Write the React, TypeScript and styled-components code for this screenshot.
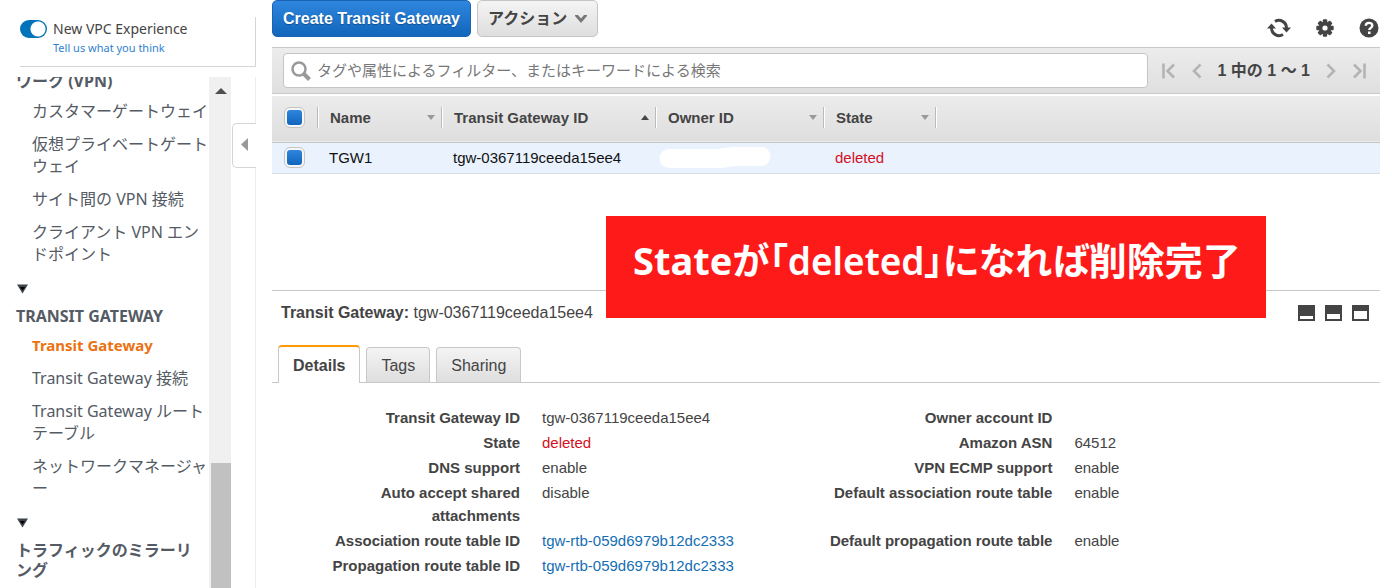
import React from "react";
import styled, { createGlobalStyle, css } from "styled-components";

const sans = `"Liberation Sans", "Noto Sans CJK JP", sans-serif`;
const ember = `"Noto Sans", "Noto Sans CJK JP", sans-serif`;

const GlobalStyle = createGlobalStyle`
  *, *::before, *::after { box-sizing: border-box; }
  body { margin: 0; background: #fff; color: #444; font: 15px/23px ${sans}; }
  a { color: #146eb4; text-decoration: none; }
  button { font: inherit; cursor: pointer; }
`;

const Page = styled.div`
  display: flex;
  height: 100vh;
  overflow: hidden;
`;

/* ---------- sidebar ---------- */

const Sidebar = styled.aside`
  flex: none;
  display: flex;
  flex-direction: column;
  width: 256px;
  padding-top: 17px;
  font-family: ${ember};
  color: #545b64;
`;

const Experience = styled.header`
  display: flex;
  gap: 6px;
  height: 50px;
  margin-left: 20px;
  border-right: 1px solid #d5d5d5;
  border-bottom: 1px solid #d5d5d5;
`;

const Switch = styled.input`
  appearance: none;
  flex: none;
  width: 27px;
  height: 18px;
  margin: 3px 0 0;
  border-radius: 9px;
  background: radial-gradient(circle at 18px 9px, #fff 7px, #0073bb 8px);
`;

const ExperienceText = styled.div`
  display: flex;
  flex-direction: column;
  padding-top: 2px;
`;

const SwitchLabel = styled.label`
  font-size: 14px;
  line-height: 20px;
  color: #444;
`;

const Feedback = styled.a`
  font-size: 11px;
  line-height: 18px;
  color: #2f7fd0;
`;

const SidebarBody = styled.div`
  flex: 1;
  display: flex;
  min-height: 0;
  margin-top: 10px;
  border-right: 1px solid #eee;
`;

const Nav = styled.nav`
  flex: 1;
  overflow: hidden;
  padding-left: 16px;
`;

const GroupTitle = styled.h2<{ $clipped?: boolean }>`
  margin: ${(p) => (p.$clipped ? "-6px 0 9px" : "0 0 8px")};
  padding-right: 8px;
  font-size: 16px;
  line-height: 20px;
  font-weight: 700;
`;

const NavList = styled.ul`
  display: flex;
  flex-direction: column;
  gap: 11px;
  margin: 0;
  padding: 0 0 0 16px;
  list-style: none;
  font-size: 16px;
  line-height: 22px;
`;

const NavLink = styled.a<{ $active?: boolean }>`
  color: ${(p) => (p.$active ? "#ec7211" : "#545b64")};
  font-weight: ${(p) => (p.$active ? 700 : 400)};
  font-size: ${(p) => (p.$active ? "15px" : "16px")};
`;

const Fold = styled.button`
  display: block;
  margin: 18px 0 13px;
  padding: 0;
  border: 0;
  background: none;
  line-height: 10px;
  height: 10px;
`;

const ScrollTrack = styled.div`
  flex: none;
  display: flex;
  flex-direction: column;
  align-items: center;
  justify-content: space-between;
  width: 22px;
  padding: 11px 0 0 2px;
  background: #f0f0f0;
`;

const ScrollThumb = styled.div`
  width: 20px;
  height: 125px;
  background: #c1c1c1;
`;

const Collapse = styled.button`
  flex: none;
  width: 24px;
  height: 45px;
  margin: 46px -1px 0 1px;
  padding: 0;
  border: 1px solid #d5d5d5;
  border-right: 0;
  border-radius: 5px 0 0 5px;
  background: #fff;
`;

/* ---------- main pane ---------- */

const Main = styled.main`
  position: relative;
  flex: 1;
  min-width: 0;
  padding: 0 12px 0 16px;
`;

const Toolbar = styled.div`
  display: flex;
  align-items: flex-start;
  gap: 6px;
  height: 47px;
`;

const Button = styled.button<{ $primary?: boolean }>`
  display: flex;
  align-items: center;
  gap: 8px;
  height: 37px;
  padding: 0 10px;
  border-radius: 5px;
  font-size: 16px;
  font-weight: 700;
  white-space: nowrap;
  ${(p) =>
    p.$primary
      ? css`
          border: 1px solid #1a62b3;
          color: #fff;
          background: linear-gradient(#2f86de, #1166bb);
          text-shadow: 0 1px 1px #0f4e91;
        `
      : css`
          border: 1px solid #c4c4c4;
          color: #444;
          background: linear-gradient(#f4f4f4, #dedede);
        `}
`;

const Tools = styled.div`
  display: flex;
  align-items: center;
  gap: 25px;
  margin: 18px 1px 0 auto;
`;

const IconButton = styled.button`
  display: flex;
  padding: 0;
  border: 0;
  background: none;
  color: #444;
`;

const FilterBar = styled.div`
  display: flex;
  align-items: center;
  height: 47px;
  padding: 0 14px 0 11px;
  border: solid #c8c8c8;
  border-width: 1px 0;
  background: linear-gradient(#ececec, #dfdfdf);
`;

const Search = styled.label`
  flex: 1;
  display: flex;
  align-items: center;
  gap: 6px;
  height: 35px;
  padding: 0 7px;
  border: 1px solid #c4c4c4;
  border-radius: 4px;
  background: #fff;
`;

const SearchInput = styled.input`
  flex: 1;
  min-width: 0;
  padding: 0;
  border: 0;
  outline: 0;
  background: none;
  font: 15px/24px ${sans};
  &::placeholder { color: #777; opacity: 1; }
`;

const Pager = styled.div`
  display: flex;
  align-items: center;
  margin-left: 14px;
  gap: 14px;
  font-size: 16px;
  font-weight: 700;
  white-space: nowrap;
`;

const PagerButton = styled(IconButton)`
  color: #b4b4b4;
`;

const TableArea = styled.section`
  min-height: 197px;
  padding-top: 2px;
  border-bottom: 1px solid #c8c8c8;
`;

const Table = styled.table`
  width: 100%;
  table-layout: fixed;
  border-collapse: collapse;
`;

const HeadRow = styled.tr`
  height: 46px;
  background: linear-gradient(#ececec, #dedede);
  border-bottom: 1px solid #c4c4c4;
`;

const Th = styled.th`
  padding: 0 0 2px;
  text-align: left;
`;

const HeadCell = styled.div<{ $start?: boolean }>`
  display: flex;
  align-items: center;
  justify-content: space-between;
  height: 21px;
  padding: ${(p) => (p.$start ? "0 0 0 12px" : "0 6px 0 12px")};
  border-right: 1px solid #bbb;
  box-shadow: 1px 0 #fff;
`;

const Row = styled.tr`
  height: 31px;
  color: #111;
  background: #eaf2fe;
  border-bottom: 1px solid #d8dde4;
`;

const Td = styled.td`
  padding: 0 0 0 11px;
  &:first-child { padding-left: 12px; }
`;

const Check = styled.input`
  appearance: none;
  display: block;
  width: 21px;
  height: 21px;
  margin: 0;
  padding: 2px;
  border: 1px solid #c4c4c4;
  border-radius: 6px;
  background: linear-gradient(#2f86de, #1166bb) content-box, #f6f6f6;
`;

const Redacted = styled.svg`
  display: block;
  margin-left: -8px;
`;

const Deleted = styled.span`
  color: #d2101e;
`;

const Banner = styled.div`
  position: absolute;
  top: 216px;
  left: 350px;
  width: 660px;
  height: 102px;
  padding: 14px 0 0 27px;
  background: #ff1a1a;
  color: #fff;
  font: 700 38px/60px ${ember};
  font-feature-settings: "palt";
  white-space: nowrap;
`;

const BannerSoft = styled.span`
  font-size: 37px;
  font-weight: 600;
`;

const DetailHead = styled.div`
  display: flex;
  align-items: center;
  justify-content: space-between;
  padding: 10px 11px 0 9px;
  font-size: 16px;
  line-height: 24px;
`;

const Panes = styled.div`
  display: flex;
  gap: 10px;
`;

const Tabs = styled.div`
  display: flex;
  align-items: flex-end;
  gap: 6px;
  margin-top: 20px;
  padding-left: 6px;
  height: 38px;
  border-bottom: 1px solid #c8c8c8;
`;

const Tab = styled.button<{ $active?: boolean }>`
  padding: 0 14px;
  font-size: 16px;
  color: #444;
  border: 1px solid #c8c8c8;
  border-bottom: 0;
  border-radius: 4px 4px 0 0;
  ${(p) =>
    p.$active
      ? css`
          height: 38px;
          margin-bottom: -1px;
          border-top: 2px solid #ff9900;
          background: #fff;
          font-weight: 700;
        `
      : css`
          height: 35px;
          background: linear-gradient(#f4f4f4, #dedede);
        `}
`;

const Details = styled.dl`
  display: grid;
  grid-template-columns: 208px 12fr 230px 13fr;
  row-gap: 2px;
  margin: 23px 0 0;
  padding-left: 40px;
`;

const Term = styled.dt`
  text-align: right;
  font-weight: 700;
`;

const Value = styled.dd`
  margin: 0;
  padding-left: 22px;
`;

const Caret = ({ up, dark }: { up?: boolean; dark?: boolean }) => (
  <svg width="8" height="5" viewBox="0 0 8 5" aria-hidden="true">
    <path d={up ? "M0 5 4 0l4 5z" : "M0 0h8L4 5z"} fill={dark ? "#444" : "#999"} />
  </svg>
);

const FoldMark = () => (
  <Fold aria-label="Toggle section">
    <svg width="13" height="10" viewBox="0 0 13 10">
      <path d="M1 .5h11L6.500 9.500z" fill="#3d444c" />
      <path d="M4 3h5L6.500 6.500z" fill="#000" />
    </svg>
  </Fold>
);

const PageArrow = ({ flip, bar, label }: { flip?: boolean; bar?: boolean; label: string }) => (
  <PagerButton aria-label={label}>
    <svg width="14" height="16" viewBox="0 0 14 16" fill="none" stroke="currentColor" strokeWidth="2.600">
      <g transform={flip ? "translate(14 0) scale(-1 1)" : undefined}>
        {bar && <path d="M1.500 .5v15" />}
        <path d={bar ? "M12 1.500 5.500 8l6.500 6.500" : "M10.500 1.500 4 8l6.500 6.500"} />
      </g>
    </svg>
  </PagerButton>
);

const PaneIcon = ({ size, label }: { size: number; label: string }) => (
  <IconButton aria-label={label}>
    <svg width="17" height="16" viewBox="0 0 17 16">
      <path d="M0 0h17v16H0z" fill="#444" />
      <path d={`M2 ${14 - size}h13v${size}H2z`} fill="#fff" />
    </svg>
  </IconButton>
);

const columns = [
  { name: "Name", width: 124 },
  { name: "Transit Gateway ID", width: 214, sorted: true },
  { name: "Owner ID", width: 168 },
  { name: "State", width: 112 },
];

const vpnLinks = ["カスタマーゲートウェイ", "仮想プライベートゲートウェイ", "サイト間の VPN 接続", "クライアント VPN エンドポイント"];
const tgwLinks = ["Transit Gateway 接続", "Transit Gateway ルートテーブル", "ネットワークマネージャー"];

const details: [string, React.ReactNode][] = [
  ["Transit Gateway ID", "tgw-0367119ceeda15ee4"],
  ["Owner account ID", ""],
  ["State", <Deleted>deleted</Deleted>],
  ["Amazon ASN", "64512"],
  ["DNS support", "enable"],
  ["VPN ECMP support", "enable"],
  ["Auto accept shared attachments", "disable"],
  ["Default association route table", "enable"],
  ["Association route table ID", <a href="#rtb">tgw-rtb-059d6979b12dc2333</a>],
  ["Default propagation route table", "enable"],
  ["Propagation route table ID", <a href="#rtb">tgw-rtb-059d6979b12dc2333</a>],
];

export default function App() {
  return (
    <Page>
      <GlobalStyle />
      <Sidebar>
        <Experience>
          <Switch type="checkbox" role="switch" id="experience" defaultChecked />
          <ExperienceText>
            <SwitchLabel htmlFor="experience">New VPC Experience</SwitchLabel>
            <Feedback href="#feedback">Tell us what you think</Feedback>
          </ExperienceText>
        </Experience>
        <SidebarBody>
          <Nav>
            <GroupTitle $clipped>ワーク (VPN)</GroupTitle>
            <NavList>
              {vpnLinks.map((t) => (
                <li key={t}><NavLink href="#nav">{t}</NavLink></li>
              ))}
            </NavList>
            <FoldMark />
            <GroupTitle>TRANSIT GATEWAY</GroupTitle>
            <NavList>
              <li><NavLink href="#nav" $active>Transit Gateway</NavLink></li>
              {tgwLinks.map((t) => (
                <li key={t}><NavLink href="#nav">{t}</NavLink></li>
              ))}
            </NavList>
            <FoldMark />
            <GroupTitle>トラフィックのミラーリング</GroupTitle>
          </Nav>
          <ScrollTrack>
            <svg width="12" height="6" viewBox="0 0 12 6"><path d="M0 6 6 0l6 6z" fill="#505050" /></svg>
            <ScrollThumb />
          </ScrollTrack>
          <Collapse aria-label="Collapse navigation">
            <svg width="7" height="13" viewBox="0 0 7 13"><path d="M7 0v13L0 6.500z" fill="#999" /></svg>
          </Collapse>
        </SidebarBody>
      </Sidebar>

      <Main>
        <Toolbar>
          <Button $primary>Create Transit Gateway</Button>
          <Button>
            アクション
            <svg width="12" height="8" viewBox="0 0 12 8"><path d="M0 0h3l3 3.500L9 0h3v1L6 8 0 1z" fill="#777" /></svg>
          </Button>
          <Tools>
            <IconButton aria-label="Refresh">
              <svg width="24" height="20" viewBox="0 0 24 20" fill="none" stroke="currentColor" strokeWidth="3">
                <path d="M8 3.500A7.600 7.600 0 0 1 19.500 10M16 16.500A7.600 7.600 0 0 1 4.500 10" />
                <path d="M15 9.500h9l-4.500 5zM0 10.500h9L4.500 5.500z" fill="currentColor" stroke="none" />
              </svg>
            </IconButton>
            <IconButton aria-label="Settings">
              <svg width="18" height="18" viewBox="-9 -9 18 18" fill="currentColor">
                {[0, 45, 90, 135].map((a) => (
                  <rect key={a} x="-2.200" y="-8.700" width="4.400" height="17.400" rx="1" transform={`rotate(${a})`} />
                ))}
                <circle r="6.500" />
                <circle r="2.600" fill="#fff" />
              </svg>
            </IconButton>
            <IconButton aria-label="Help">
              <svg width="20" height="20" viewBox="0 0 20 20" fill="none">
                <circle cx="10" cy="10" r="9.500" fill="currentColor" />
                <path d="M6.800 7.800C6.800 3.800 13.300 4 13.300 7.500c0 2.300-3 2.400-3 4.600" stroke="#fff" strokeWidth="2.400" />
                <path d="M9 13.500h2.600V16H9z" fill="#fff" />
              </svg>
            </IconButton>
          </Tools>
        </Toolbar>

        <FilterBar>
          <Search>
            <svg width="20" height="20" viewBox="0 0 20 20" fill="none" stroke="#999">
              <circle cx="8" cy="8" r="6.500" strokeWidth="2.500" />
              <path d="m12.500 12.500 6 6" strokeWidth="4" />
            </svg>
            <SearchInput aria-label="フィルター" placeholder="タグや属性によるフィルター、またはキーワードによる検索" />
          </Search>
          <Pager>
            <PageArrow bar label="First page" />
            <PageArrow label="Previous page" />
            <span>1 中の 1 ～ 1</span>
            <PageArrow flip label="Next page" />
            <PageArrow flip bar label="Last page" />
          </Pager>
        </FilterBar>

        <TableArea>
          <Table>
            <colgroup>
              <col width="46" />
              {columns.map((c) => <col key={c.name} width={c.width} />)}
              <col />
            </colgroup>
            <thead>
              <HeadRow>
                <Th>
                  <HeadCell $start><Check type="checkbox" aria-label="Select all" defaultChecked /></HeadCell>
                </Th>
                {columns.map((c) => (
                  <Th key={c.name} scope="col">
                    <HeadCell>{c.name}<Caret up={c.sorted} dark={c.sorted} /></HeadCell>
                  </Th>
                ))}
                <Th />
              </HeadRow>
            </thead>
            <tbody>
              <Row>
                <Td><Check type="checkbox" aria-label="Select TGW1" defaultChecked /></Td>
                <Td>TGW1</Td>
                <Td>tgw-0367119ceeda15ee4</Td>
                <Td>
                  <Redacted width="112" height="21" viewBox="0 0 112 21">
                    <path d="M10 2h48L74 0h28a9.500 9.500 0 0 1 0 19H78l-16 2H10A9.500 9.500 0 0 1 10 2z" fill="#fff" />
                  </Redacted>
                </Td>
                <Td><Deleted>deleted</Deleted></Td>
                <Td />
              </Row>
            </tbody>
          </Table>
        </TableArea>

        <DetailHead>
          <span><b>Transit Gateway:</b> tgw-0367119ceeda15ee4</span>
          <Panes>
            <PaneIcon size={3} label="Minimize pane" />
            <PaneIcon size={5} label="Split pane" />
            <PaneIcon size={8} label="Maximize pane" />
          </Panes>
        </DetailHead>
        <Tabs role="tablist">
          <Tab role="tab" aria-selected $active>Details</Tab>
          <Tab role="tab">Tags</Tab>
          <Tab role="tab">Sharing</Tab>
        </Tabs>
        <Details>
          {details.map(([term, value]) => (
            <React.Fragment key={term}>
              <Term>{term}</Term>
              <Value>{value}</Value>
            </React.Fragment>
          ))}
        </Details>

        <Banner>
          State<BannerSoft>が「deleted」になれば</BannerSoft>削除完了
        </Banner>
      </Main>
    </Page>
  );
}
